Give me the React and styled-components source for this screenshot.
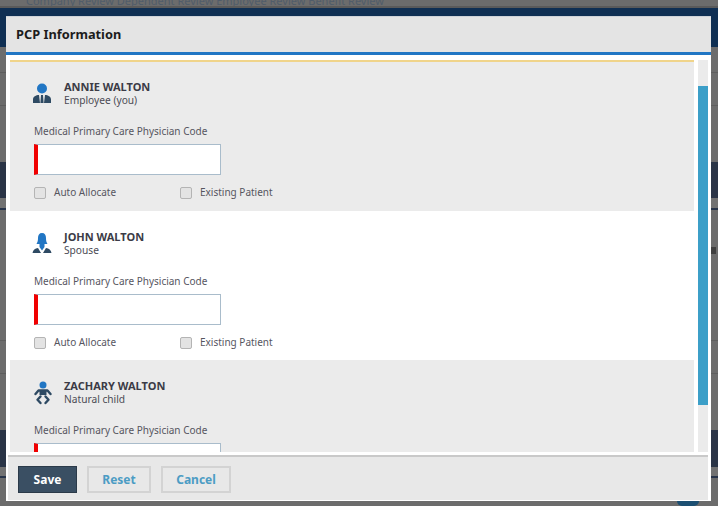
import React from "react";
import styled, { createGlobalStyle } from "styled-components";

const Global = createGlobalStyle`
  html, body { margin: 0; padding: 0; background: #6c6c6c; }
  body { font-family: "Noto Sans", "Liberation Sans", sans-serif; }
`;

const Page = styled.div`
  position: relative;
  width: 718px;
  height: 506px;
  overflow: hidden;
  background: #6c6c6c;
  display: flex;
  flex-direction: column;
`;

const TopText = styled.div`
  height: 6px;
  line-height: 1px;
  padding-left: 26px;
  font-size: 11px;
  color: #505c6a;
  white-space: nowrap;
  overflow: hidden;
`;
const Band = styled.div`
  flex: none;
  height: ${(p) => p.$h}px;
  background: ${(p) => p.$c};
`;
const Line = styled.div`
  flex: none;
  height: ${(p) => p.$h}px;
  border-bottom: 1px solid #5e5e5e;
  box-sizing: border-box;
`;
const SideMark = styled.span`
  position: absolute;
  right: 2px;
  top: 247px;
  width: 5px;
  height: 7px;
  background: #3f3f3f;
`;
const CornerMark = styled.span`
  position: absolute;
  left: 677px;
  top: 501px;
  width: 22px;
  height: 5px;
  background: #1c4f72;
  border-radius: 0 0 8px 8px;
`;

const Modal = styled.section`
  position: absolute;
  left: 6px;
  top: 16px;
  width: 705px;
  height: 485px;
  box-sizing: border-box;
  background: #fff;
  border-top: 1px solid #cfd3d8;
  display: flex;
  flex-direction: column;
`;
const Header = styled.header`
  flex: none;
  height: 33px;
  box-sizing: content-box;
  padding: 0 0 2px 10px;
  display: flex;
  align-items: center;
  background: #e4e4e4;
  border-bottom: 3px solid #2176c4;
  font-size: 12.8px;
  font-weight: 700;
  color: #1c1c1c;
`;
const Body = styled.div`
  flex: none;
  height: 400px;
  box-sizing: border-box;
  padding: 5px 3px 3px 4px;
  display: flex;
  gap: 4px;
`;
const List = styled.div`
  width: 684px;
  overflow: hidden;
  border-top: 2px solid #f0d48a;
`;
const Row = styled.article`
  height: 149px;
  box-sizing: border-box;
  padding: ${(p) => 17 + (p.$nudge || 0)}px 24px 0;
  background: ${(p) => (p.$shade ? "#ebebeb" : "#fff")};
`;
const Person = styled.div`
  display: flex;
  align-items: center;
  height: 28px;
  margin-bottom: 17px;
`;
const IconSlot = styled.div`
  width: 30px;
  margin: 1px 0 0 -2px;
  padding-right: 2px;
  display: flex;
  svg { display: block; }
`;
const Name = styled.div`
  font-size: 11px;
  line-height: 14px;
  font-weight: 700;
  color: #3b3b46;
`;
const Relation = styled.div`
  font-size: 10.2px;
  line-height: 13px;
  color: #4b4b55;
`;
const Label = styled.label`
  display: block;
  font-size: 10px;
  line-height: 14px;
  color: #56565f;
  margin-bottom: 6px;
`;
const CodeInput = styled.input`
  display: block;
  width: 187px;
  height: 31px;
  box-sizing: border-box;
  background: #fff;
  border: 1px solid #a9bccb;
  border-left: 4px solid #f00000;
  outline: none;
  padding: 0 6px;
`;
const Options = styled.div`
  display: flex;
  margin-top: 11px;
`;
const Option = styled.div`
  width: 146px;
  display: flex;
  align-items: center;
  gap: 8px;
  font-size: 10px;
  line-height: 13px;
  color: #56565f;
`;
const Box = styled.span`
  width: 12px;
  height: 12px;
  box-sizing: border-box;
  background: #e3e3e3;
  border: 1px solid #b4b4b4;
  border-radius: 2px;
`;

const Track = styled.div`
  width: 10px;
  height: 392px;
  background: #ebebeb;
  padding-top: 26px;
  box-sizing: border-box;
`;
const Thumb = styled.div`
  height: 319px;
  background: #3c9fc8;
`;

const Footer = styled.footer`
  flex: none;
  height: 45px;
  box-sizing: border-box;
  margin: 0 3px 0 2px;
  padding: 9px 0 0 10px;
  background: #e8e8e8;
  border-top: 2px solid #c9c9c9;
  display: flex;
  gap: 10px;
  align-items: flex-start;
`;
const Button = styled.button`
  height: 27px;
  width: ${(p) => p.$w}px;
  box-sizing: border-box;
  padding: 0;
  font-family: inherit;
  font-size: 12px;
  line-height: 16px;
  font-weight: 700;
  color: ${(p) => (p.$primary ? "#fff" : "#4c9cc4")};
  background: ${(p) => (p.$primary ? "#3a4f63" : "#e8e8e8")};
  border: ${(p) => (p.$primary ? "1px solid #2b3a49" : "2px solid #d3d3d3")};
`;

const Employee = () => (
  <svg width="20" height="24" viewBox="0 0 20 24">
    <circle cx="10" cy="6.5" r="5" fill="#2176c4" />
    <path d="M1 21v-3.5C1 14.5 4 13 7 13l1 8zM19 21v-3.5c0-3-3-4.500-6-4.500l-1 8zM9 13h2l.6 8H8.400z" fill="#2e4a63" />
  </svg>
);
const Spouse = () => (
  <svg width="20" height="24" viewBox="0 0 20 24">
    <path d="M10 1c2.800 0 4 2 4 5 0 2.500.3 4 1.500 6H4.500C5.700 10 6 8.500 6 6c0-3 1.200-5 4-5z" fill="#2176c4" />
    <path d="M7.500 12h5v3L10 18.500 7.500 15z" fill="#2176c4" />
    <path d="M0.500 21c.5-3 2.500-4.500 5.500-5L9 21zM19.500 21c-.5-3-2.500-4.500-5.500-5L11 21z" fill="#2e4a63" />
  </svg>
);
const Child = () => (
  <svg width="20" height="24" viewBox="0 0 20 24" fill="none">
    <circle cx="11" cy="4" r="3.500" fill="#2176c4" />
    <path d="M3.500 13 6.500 9.500h9l3 3.500" stroke="#2e4a63" strokeWidth="2.400" strokeLinecap="round" strokeLinejoin="round" />
    <path d="M7.500 10v4h7v-4" fill="#2e4a63" />
    <path d="M8.500 15.500 5.500 18.800 8.500 22M13.500 15.500l3 3.300-3 3.200" stroke="#2e4a63" strokeWidth="2.400" strokeLinecap="round" strokeLinejoin="round" />
  </svg>
);

const people = [
  { name: "ANNIE WALTON", relation: "Employee (you)", Icon: Employee, shade: true },
  { name: "JOHN WALTON", relation: "Spouse", Icon: Spouse, nudge: 1 },
  { name: "ZACHARY WALTON", relation: "Natural child", Icon: Child, shade: true, nudge: 1 },
];

export default function App() {
  return (
    <Page>
      <Global />
      <TopText>Company Review   Dependent Review   Employee Review   Benefit Review</TopText>
      <Band $h={2} $c="#5a5a5a" />
      <Band $h={39} $c="#0f2f53" />
      <Line $h={26} />
      <Line $h={33} />
      <Band $h={56} $c="#6c6c6c" />
      <Band $h={36} $c="#2a3446" />
      <Band $h={10} $c="#727272" />
      <Band $h={2} $c="#27344a" />
      <Line $h={131} />
      <Line $h={33} />
      <Band $h={56} $c="#6c6c6c" />
      <Band $h={37} $c="#2a3446" />
      <Band $h={9} $c="#727272" />
      <Band $h={2} $c="#27344a" />
      <SideMark />
      <CornerMark />
      <Modal>
        <Header>PCP Information</Header>
        <Body>
          <List>
            {people.map(({ name, relation, Icon, shade, nudge }) => (
              <Row key={name} $shade={shade} $nudge={nudge}>
                <Person>
                  <IconSlot><Icon /></IconSlot>
                  <div>
                    <Name>{name}</Name>
                    <Relation>{relation}</Relation>
                  </div>
                </Person>
                <Label>Medical Primary Care Physician Code</Label>
                <CodeInput />
                <Options>
                  <Option><Box />Auto Allocate</Option>
                  <Option><Box />Existing Patient</Option>
                </Options>
              </Row>
            ))}
          </List>
          <Track><Thumb /></Track>
        </Body>
        <Footer>
          <Button $primary $w={59}>Save</Button>
          <Button $w={64}>Reset</Button>
          <Button $w={70}>Cancel</Button>
        </Footer>
      </Modal>
    </Page>
  );
}
